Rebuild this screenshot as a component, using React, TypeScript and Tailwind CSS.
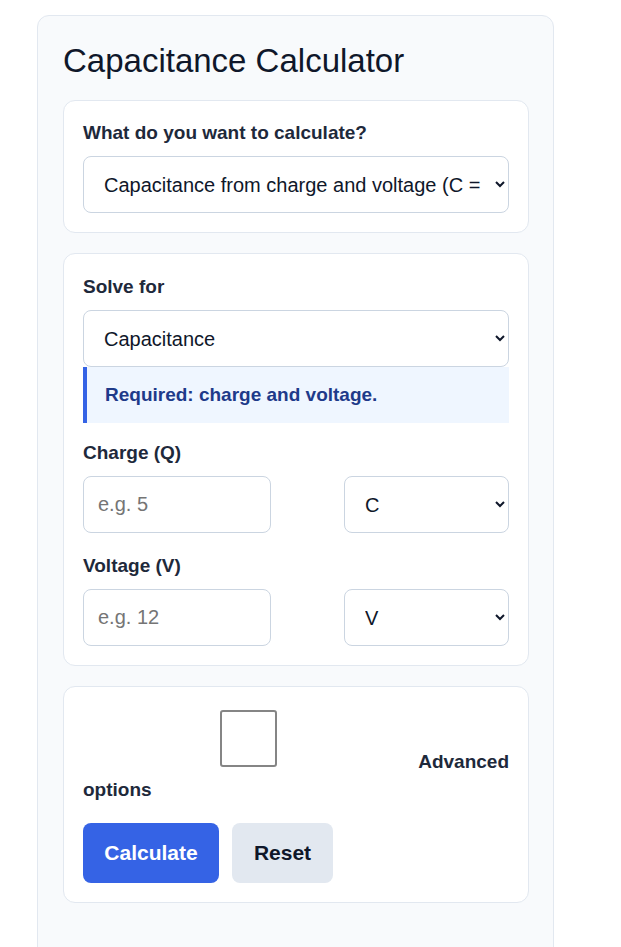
import { useState } from 'react';

const font = { fontFamily: '"Liberation Sans", Arial, sans-serif' };

export default function App() {
  const [advanced, setAdvanced] = useState(false);
  const [charge, setCharge] = useState('');
  const [voltage, setVoltage] = useState('');

  return (
    <div className="min-h-[947px] bg-white pl-[37px] pt-[15px] pr-[67px]" style={font}>
      <div className="rounded-xl border border-[#e2e8f0] bg-[#f8fafc] pl-[25px] pr-[24px] pt-[25px] pb-[60px]">
        <h1 className="text-[33px] leading-[40px] font-normal text-[#0f172a] mb-[19px]">Capacitance Calculator</h1>

        {/* mode */}
        <div className="rounded-xl border border-[#e2e8f0] bg-white p-[19px] mb-[20px]">
          <label className="block text-[19px] leading-[22px] font-bold text-[#1e293b] mt-[2px] mb-[12px]">
            What do you want to calculate?
          </label>
          <select className="w-full h-[57px] rounded-lg border border-[#cbd5e1] bg-white pl-4 pr-2 text-[20px] text-[#0f172a]">
            <option>Capacitance from charge and voltage (C = Q / V)</option>
            <option>Energy stored (E = ½CV²)</option>
          </select>
        </div>

        {/* inputs */}
        <div className="rounded-xl border border-[#e2e8f0] bg-white p-[19px] mb-[20px]">
          <label className="block text-[19px] leading-[22px] font-bold text-[#1e293b] mt-[3px] mb-[12px]">Solve for</label>
          <select className="w-full h-[57px] rounded-lg border border-[#cbd5e1] bg-white pl-4 pr-2 text-[20px] text-[#0f172a]">
            <option>Capacitance</option>
            <option>Charge</option>
            <option>Voltage</option>
          </select>
          <div className="h-[56px] flex items-center border-l-4 border-[#3563e5] bg-[#eff6ff] pl-[18px] text-[19px] font-bold text-[#1e3a8a]">
            Required: charge and voltage.
          </div>

          <label className="block text-[19px] leading-[22px] font-bold text-[#1e293b] mt-[19px] mb-[12px]">Charge (Q)</label>
          <div className="flex justify-between">
            <input
              value={charge}
              onChange={(e) => setCharge(e.target.value)}
              placeholder="e.g. 5"
              className="w-[188px] h-[57px] rounded-lg border border-[#cbd5e1] px-[14px] text-[20px] text-[#0f172a] placeholder:text-[#757575] outline-none"
            />
            <select className="w-[165px] h-[57px] rounded-lg border border-[#cbd5e1] bg-white pl-4 pr-2 text-[20px] text-[#0f172a]">
              <option>C</option>
              <option>mC</option>
              <option>µC</option>
            </select>
          </div>

          <label className="block text-[19px] leading-[22px] font-bold text-[#1e293b] mt-[22px] mb-[12px]">Voltage (V)</label>
          <div className="flex justify-between">
            <input
              value={voltage}
              onChange={(e) => setVoltage(e.target.value)}
              placeholder="e.g. 12"
              className="w-[188px] h-[57px] rounded-lg border border-[#cbd5e1] px-[14px] text-[20px] text-[#0f172a] placeholder:text-[#757575] outline-none"
            />
            <select className="w-[165px] h-[57px] rounded-lg border border-[#cbd5e1] bg-white pl-4 pr-2 text-[20px] text-[#0f172a]">
              <option>V</option>
              <option>mV</option>
              <option>kV</option>
            </select>
          </div>
        </div>

        {/* options + actions */}
        <div className="rounded-xl border border-[#e2e8f0] bg-white px-[19px] pt-[23px] pb-[19px]">
          <label className="block text-[19px] font-bold text-[#1e293b]">
            <div className="flex items-end justify-between">
              <input
                type="checkbox"
                checked={advanced}
                onChange={(e) => setAdvanced(e.target.checked)}
                className="ml-[137px] w-[57px] h-[57px] appearance-none rounded-[3px] border-2 border-[#858585] bg-white checked:bg-[#3563e5]"
              />
              <span className="leading-[20px] mb-[-5px]">Advanced</span>
            </div>
            <div className="mt-[12px] leading-[22px]">options</div>
          </label>
          <div className="flex gap-[13px] mt-[22px]">
            <button className="w-[136px] h-[60px] rounded-lg bg-[#3563e5] text-white text-[21px] font-bold">Calculate</button>
            <button
              onClick={() => { setCharge(''); setVoltage(''); setAdvanced(false); }}
              className="w-[101px] h-[60px] rounded-lg bg-[#e2e8f0] text-[#0f172a] text-[21px] font-bold"
            >
              Reset
            </button>
          </div>
        </div>
      </div>
    </div>
  );
}
